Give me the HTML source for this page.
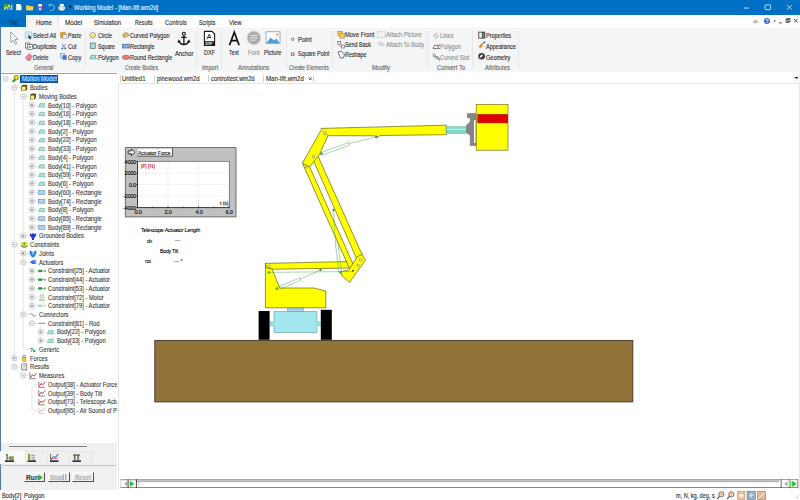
<!DOCTYPE html>
<html><head><meta charset="utf-8">
<style>
*{margin:0;padding:0;box-sizing:border-box}
html,body{width:800px;height:500px;overflow:hidden;background:#fff;font-family:"Liberation Sans",sans-serif;color:#222}
.a{position:absolute}
.t{position:absolute;white-space:nowrap;line-height:8px;transform:scaleX(.915);transform-origin:0 0;-webkit-text-stroke:0.1px currentColor}
.tc{transform-origin:50% 0}.tr{transform-origin:100% 0}
svg{position:absolute;overflow:visible}
</style></head><body>
<div class="a" style="left:0px;top:0px;width:800px;height:15px;background:#0070C4;"></div>
<div class="t" style="left:74.20px;top:4.20px;color:#f0f6ff;font-size:6.8px;transform:scaleX(0.864);">Working Model - [Man-lift.wm2d]</div>
<svg style="left:0;top:0" width="80" height="15">
<path d="M4 4.5h2l1 3 1-3h1.5l1 3 0.8-3h1v5.5h-1.5l-0.8-2.5-1 2.5h-1.5l-1-2.5-1 2.5h-1.5z" fill="#f0d020"/>
<rect x="4" y="4" width="3" height="3" fill="#40b040"/><rect x="8" y="7" width="3" height="3" fill="#30a0e0"/>
<path d="M16.2 4h3.6l1.6 1.6v4.6h-5.2z" fill="#fff"/><path d="M19.8 4v1.6h1.6" fill="#ccc"/>
<path d="M26 5.2h2.6l0.8 0.8h3.6v4.2h-7z" fill="#f0c040"/><path d="M26.5 10.2l1.2-3h6l-1.2 3z" fill="#f8d870"/>
<rect x="37" y="4" width="6.2" height="6.2" fill="#5a4fb0"/><rect x="38.2" y="4" width="3.8" height="2.4" fill="#fff"/><rect x="38.8" y="7.6" width="2.6" height="2.6" fill="#d8d0f0"/>
<path d="M49.2 5.5a3 3 0 1 1 1 4.8" stroke="#8ac0f0" stroke-width="1" fill="none"/><path d="M48 4.2l1.2 2.6 2-1.8z" fill="#8ac0f0"/>
<path d="M58.5 6.5h6.5v3h-6.5z" fill="#e8e8e8"/><path d="M59.8 4h4v2.5h-4z" fill="#fff"/><path d="M59.8 9h4v1.5h-4z" fill="#fff"/><circle cx="63.5" cy="8" r="0.6" fill="#40c040"/>
<path d="M68.5 5.8l1.8 2.3 1.8-2.3z" fill="#111"/>
</svg>
<svg style="left:740;top:0" width="60" height="15">
<rect x="3.9" y="7.6" width="4.9" height="0.9" fill="#d8e8f8"/>
<rect x="25" y="4.8" width="5.6" height="4.8" rx="0.8" fill="none" stroke="#d8e8f8" stroke-width="0.9"/>
<path d="M47 5l4.9 4.5M51.9 5l-4.9 4.5" stroke="#d8e8f8" stroke-width="0.8"/>
</svg>
<div class="a" style="left:0px;top:15px;width:800px;height:12px;background:#fff;"></div>
<div class="a" style="left:0px;top:15px;width:26px;height:12px;background:#0070C4;"></div>
<div class="t" style="left:9.40px;top:19.00px;color:#0c2d5c;font-size:6.8px;transform:scaleX(0.808);">File</div>
<div class="a" style="left:27px;top:14.5px;width:31.5px;height:13px;background:#F4F5F7;border-left:0.5px solid #e4e5e6;border-right:0.5px solid #e4e5e6"></div>
<div class="t" style="left:36.00px;top:19.00px;color:#262626;font-size:6.8px;transform:scaleX(0.876);">Home</div>
<div class="t" style="left:64.50px;top:19.00px;color:#262626;font-size:6.8px;transform:scaleX(0.925);">Model</div>
<div class="t" style="left:94.20px;top:19.00px;color:#262626;font-size:6.8px;transform:scaleX(0.853);">Simulation</div>
<div class="t" style="left:134.50px;top:19.00px;color:#262626;font-size:6.8px;transform:scaleX(0.782);">Results</div>
<div class="t" style="left:165.00px;top:19.00px;color:#262626;font-size:6.8px;transform:scaleX(0.856);">Controls</div>
<div class="t" style="left:199.40px;top:19.00px;color:#262626;font-size:6.8px;transform:scaleX(0.791);">Scripts</div>
<div class="t" style="left:229.10px;top:19.00px;color:#262626;font-size:6.8px;transform:scaleX(0.840);">View</div>
<svg style="left:750;top:15" width="50" height="12">
<path d="M3.5 7l2-2 2 2" stroke="#666" stroke-width="0.8" fill="none"/><rect x="3.5" y="7" width="4" height="0.6" fill="#666"/>
<circle cx="17" cy="6" r="3" fill="#3b6fd0"/><text x="15.6" y="8" font-size="5" fill="#fff" font-family="Liberation Sans" font-weight="bold">?</text>
<path d="M23.5 5.5l1.2 1.5 1.2-1.5z" fill="#333"/>
<rect x="29" y="7.5" width="3" height="0.8" fill="#333"/>
<rect x="36" y="4.5" width="3" height="3" fill="none" stroke="#333" stroke-width="0.7"/><rect x="37" y="3.5" width="3" height="3" fill="none" stroke="#333" stroke-width="0.7"/>
<path d="M44 4l3.5 3.5M47.5 4l-3.5 3.5" stroke="#333" stroke-width="0.8"/>
</svg>
<div class="a" style="left:0px;top:27px;width:800px;height:46px;background:#F4F5F7;"></div>
<div class="a" style="left:1px;top:27px;width:799px;height:1px;background:#FBFCFD;"></div>
<div class="a" style="left:0px;top:71.8px;width:800px;height:1.4px;background:#FBFBFC;"></div>
<div class="a" style="left:0px;top:73.2px;width:116.5px;height:1.1px;background:#A4A4A4;"></div>
<div class="t" style="left:6.20px;top:49.40px;color:#1e1e1e;font-size:6.5px;transform:scaleX(0.833);">Select</div>
<div class="t" style="left:33.20px;top:31.90px;color:#1e1e1e;font-size:6.5px;transform:scaleX(0.863);">Select All</div>
<div class="t" style="left:33.45px;top:42.50px;color:#1e1e1e;font-size:6.5px;transform:scaleX(0.873);">Duplicate</div>
<div class="t" style="left:33.45px;top:53.80px;color:#1e1e1e;font-size:6.5px;transform:scaleX(0.827);">Delete</div>
<div class="t" style="left:68.45px;top:31.90px;color:#1e1e1e;font-size:6.5px;transform:scaleX(0.798);">Paste</div>
<div class="t" style="left:68.45px;top:42.50px;color:#1e1e1e;font-size:6.5px;transform:scaleX(0.856);">Cut</div>
<div class="t" style="left:68.45px;top:53.80px;color:#1e1e1e;font-size:6.5px;transform:scaleX(0.878);">Copy</div>
<div class="t" style="left:34.10px;top:63.80px;color:#606060;font-size:6.5px;transform:scaleX(0.832);">General</div>
<div class="a" style="left:85.3px;top:31px;width:0.9px;height:38px;background:#E7E8EA;"></div>
<div class="t" style="left:98.40px;top:31.70px;color:#1e1e1e;font-size:6.5px;transform:scaleX(0.852);">Circle</div>
<div class="t" style="left:98.40px;top:42.50px;color:#1e1e1e;font-size:6.5px;transform:scaleX(0.812);">Square</div>
<div class="t" style="left:98.40px;top:53.80px;color:#1e1e1e;font-size:6.5px;transform:scaleX(0.880);">Polygon</div>
<div class="t" style="left:130.40px;top:31.70px;color:#1e1e1e;font-size:6.5px;transform:scaleX(0.857);">Curved Polygon</div>
<div class="t" style="left:130.40px;top:42.50px;color:#1e1e1e;font-size:6.5px;transform:scaleX(0.839);">Rectangle</div>
<div class="t" style="left:130.40px;top:53.80px;color:#1e1e1e;font-size:6.5px;transform:scaleX(0.841);">Round Rectangle</div>
<div class="t" style="left:124.70px;top:63.60px;color:#606060;font-size:6.5px;transform:scaleX(0.804);">Create Bodies</div>
<div class="t" style="left:175.00px;top:49.50px;color:#1e1e1e;font-size:6.5px;transform:scaleX(0.892);">Anchor</div>
<div class="a" style="left:196.3px;top:31px;width:0.9px;height:38px;background:#E7E8EA;"></div>
<div class="t" style="left:203.80px;top:49.40px;color:#1e1e1e;font-size:6.5px;transform:scaleX(0.850);">DXF</div>
<div class="t" style="left:201.70px;top:63.80px;color:#606060;font-size:6.5px;transform:scaleX(0.886);">Import</div>
<div class="a" style="left:221.3px;top:31px;width:0.9px;height:38px;background:#E7E8EA;"></div>
<div class="t" style="left:229.20px;top:49.40px;color:#1e1e1e;font-size:6.5px;transform:scaleX(0.821);">Text</div>
<div class="t" style="left:248.10px;top:49.40px;color:#8c8c8c;font-size:6.5px;transform:scaleX(0.890);">Font</div>
<div class="t" style="left:264.40px;top:49.40px;color:#1e1e1e;font-size:6.5px;transform:scaleX(0.863);">Picture</div>
<div class="t" style="left:238.45px;top:63.80px;color:#606060;font-size:6.5px;transform:scaleX(0.910);">Annotations</div>
<div class="a" style="left:286.3px;top:31px;width:0.9px;height:38px;background:#E7E8EA;"></div>
<div class="t" style="left:297.60px;top:35.80px;color:#1e1e1e;font-size:6.5px;transform:scaleX(0.918);">Point</div>
<div class="t" style="left:297.60px;top:50.30px;color:#1e1e1e;font-size:6.5px;transform:scaleX(0.839);">Square Point</div>
<div class="t" style="left:289.20px;top:63.80px;color:#606060;font-size:6.5px;transform:scaleX(0.825);">Create Elements</div>
<div class="a" style="left:332.3px;top:31px;width:0.9px;height:38px;background:#E7E8EA;"></div>
<div class="t" style="left:345.45px;top:31.30px;color:#1e1e1e;font-size:6.5px;transform:scaleX(0.892);">Move Front</div>
<div class="t" style="left:345.45px;top:41.40px;color:#1e1e1e;font-size:6.5px;transform:scaleX(0.828);">Send Back</div>
<div class="t" style="left:345.45px;top:51.40px;color:#1e1e1e;font-size:6.5px;transform:scaleX(0.828);">Reshape</div>
<div class="t" style="left:385.95px;top:31.30px;color:#8c8c8c;font-size:6.5px;transform:scaleX(0.879);">Attach Picture</div>
<div class="t" style="left:385.95px;top:41.40px;color:#8c8c8c;font-size:6.5px;transform:scaleX(0.873);">Attach To Body</div>
<div class="t" style="left:372.20px;top:63.70px;color:#606060;font-size:6.5px;transform:scaleX(0.946);">Modify</div>
<div class="a" style="left:427.3px;top:31px;width:0.9px;height:38px;background:#E7E8EA;"></div>
<div class="t" style="left:440.45px;top:31.90px;color:#8c8c8c;font-size:6.5px;transform:scaleX(0.873);">Lines</div>
<div class="t" style="left:440.45px;top:42.60px;color:#8c8c8c;font-size:6.5px;transform:scaleX(0.898);">Polygon</div>
<div class="t" style="left:440.45px;top:53.70px;color:#8c8c8c;font-size:6.5px;transform:scaleX(0.863);">Curved Slot</div>
<div class="t" style="left:437.20px;top:63.70px;color:#606060;font-size:6.5px;transform:scaleX(0.897);">Convert To</div>
<div class="a" style="left:472.3px;top:31px;width:0.9px;height:38px;background:#E7E8EA;"></div>
<div class="t" style="left:485.95px;top:31.90px;color:#1e1e1e;font-size:6.5px;transform:scaleX(0.846);">Properties</div>
<div class="t" style="left:485.95px;top:42.60px;color:#1e1e1e;font-size:6.5px;transform:scaleX(0.850);">Appearance</div>
<div class="t" style="left:485.95px;top:53.70px;color:#1e1e1e;font-size:6.5px;transform:scaleX(0.852);">Geometry</div>
<div class="t" style="left:484.70px;top:63.70px;color:#606060;font-size:6.5px;transform:scaleX(0.905);">Attributes</div>
<div class="a" style="left:518.3px;top:31px;width:0.9px;height:38px;background:#E7E8EA;"></div>
<svg style="left:0;top:0" width="800" height="74">
<!-- select arrow -->
<path d="M10.8 31.8 L10.8 42.5 L13.2 40.3 L15.3 44.3 L16.8 43.5 L14.8 39.6 L18 39.3 Z" fill="#fff" stroke="#777" stroke-width="0.7"/>
<!-- select all -->
<rect x="25.2" y="31.8" width="6.6" height="6.2" fill="#d8ecf8" stroke="#5aa0d0" stroke-width="0.6" stroke-dasharray="1 0.6"/>
<path d="M28.5 34.5l3 3.3-1.2 0.1 0.8 1.4-0.6 0.3-0.8-1.4-1 0.8z" fill="#222"/>
<!-- duplicate -->
<rect x="25.3" y="43" width="4.5" height="5" fill="#fff" stroke="#444" stroke-width="0.6"/>
<rect x="27.3" y="44.5" width="5" height="5" fill="#fff" stroke="#444" stroke-width="0.6"/>
<path d="M29.8 45.6v2.8M28.4 47h2.8" stroke="#222" stroke-width="0.5"/>
<!-- delete eraser -->
<path d="M25.3 57.5l4-4 3.3 3.3-4 4z" fill="#f08a9a" stroke="#b05060" stroke-width="0.5"/>
<path d="M26.5 59.8h5" stroke="#555" stroke-width="0.5"/>
<!-- paste -->
<rect x="60.2" y="32" width="5.5" height="6.2" fill="#d9a23a"/><rect x="62.8" y="34.6" width="4.2" height="4" fill="#eef" stroke="#667" stroke-width="0.4"/>
<!-- cut -->
<path d="M62 44l3 3.5M65.5 44l-3 3.5" stroke="#3a5fb0" stroke-width="0.7"/><circle cx="62.3" cy="48.5" r="0.9" fill="#3a5fb0"/><circle cx="65.3" cy="48.5" r="0.9" fill="#3a5fb0"/>
<!-- copy -->
<rect x="60.3" y="53.4" width="4" height="4.6" fill="#dde8f8" stroke="#5a7ab8" stroke-width="0.5"/><rect x="62.5" y="55.2" width="4.2" height="4.6" fill="#4a78c8"/>
<!-- circle -->
<circle cx="92.7" cy="35.3" r="2.8" fill="#f6e88a" stroke="#777" stroke-width="0.6"/>
<!-- square -->
<rect x="90.2" y="43" width="5" height="5.6" fill="#9fe0e8" stroke="#555" stroke-width="0.6"/>
<!-- polygon -->
<path d="M89.8 58.8 L91.5 55 L96.5 55.4 L95 57 L96.8 58.8 Z" fill="#9fe0d8" stroke="#4a8a88" stroke-width="0.6"/>
<!-- curved polygon -->
<path d="M123 35.5c0-3 4-3.5 5.5-1.5c1 1.5 -0.5 3.2 -2 2.2c-1.3-0.8-2.5 0.5-1.5 1.7c-1.2 0-2-1-2-2.4z" fill="#f0b858" stroke="#8a6a30" stroke-width="0.6"/>
<!-- rectangle -->
<rect x="122.6" y="44.2" width="6.8" height="3.8" fill="#7ab0e8" stroke="#3a5a90" stroke-width="0.6"/>
<!-- round rect -->
<rect x="122.6" y="55.4" width="6.8" height="3.8" rx="1.9" fill="#f07878" stroke="#903838" stroke-width="0.6"/>
<!-- anchor -->
<circle cx="183.9" cy="33.8" r="1.5" fill="none" stroke="#111" stroke-width="1.1"/>
<path d="M183.9 35.3v9.2M181.2 37.4h5.4" stroke="#111" stroke-width="1.3" fill="none"/>
<path d="M178.9 41c0.8 2.4 2.6 3.5 5 3.5s4.2-1.1 5-3.5" stroke="#111" stroke-width="1.3" fill="none"/>
<path d="M177.5 42.2l1.4-2.5 1.5 2.3z M190.3 42.2l-1.4-2.5-1.5 2.3z" fill="#111" stroke="#111" stroke-width="0.4"/>
<!-- DXF -->
<path d="M204.4 31.4h7.6l2.6 2.6v11.4h-10.2z" fill="#fff" stroke="#1a1a1a" stroke-width="1.1" stroke-linejoin="round"/>
<rect x="204.2" y="41.2" width="10.6" height="4.5" fill="#1a1a1a"/>
<path d="M206.8 39.3l2.4-5 1.2 2.6M208 37.5h3.2" stroke="#1a1a1a" stroke-width="0.9" fill="none"/>
<text x="205.6" y="44.8" font-size="3.3" fill="#fff" font-family="Liberation Sans" font-weight="bold">DXF</text>
<!-- A -->
<path d="M229.5 45.2 L234.3 32.2 L239.1 45.2 M231.3 40.6 H237.3" stroke="#111" stroke-width="1.7" fill="none"/>
<!-- font circle -->
<circle cx="253.9" cy="37.9" r="6.8" fill="#ABABAB" stroke="#d4d4d4" stroke-width="1"/>
<path d="M250.2 35.6h7.4M250.2 37.9h7.4M250.2 40.2h5.2" stroke="#f2f2f2" stroke-width="0.9"/>
<!-- picture -->
<rect x="266" y="31.8" width="14" height="11.5" fill="#fff" stroke="#888" stroke-width="0.7"/>
<path d="M266.5 43 L270.5 37.5 L274 40.5 L276.5 38.5 L279.5 43 Z" fill="#4a9be0"/>
<circle cx="277.2" cy="34.6" r="1" fill="#f08040"/>
<!-- point -->
<circle cx="292.7" cy="39.3" r="1.2" fill="none" stroke="#333" stroke-width="0.6"/>
<rect x="291.5" y="53" width="2.6" height="2.6" fill="none" stroke="#333" stroke-width="0.6"/>
<!-- move front -->
<rect x="337.8" y="31.2" width="4.5" height="4.5" fill="#f6c84a" stroke="#777" stroke-width="0.5"/>
<rect x="339.8" y="33.2" width="5" height="5" fill="#f6c84a" stroke="#888" stroke-width="0.5"/>
<!-- send back -->
<rect x="337.8" y="41.3" width="3" height="3" fill="none" stroke="#555" stroke-width="0.6"/>
<rect x="341.3" y="45" width="3" height="3" fill="none" stroke="#555" stroke-width="0.6"/>
<path d="M339 45v1.5h2" stroke="#e08030" stroke-width="0.5" fill="none"/>
<!-- reshape -->
<path d="M338 52l3-0.8 3.5 2.8-1 3.8-3 0.3z" fill="#fff" stroke="#333" stroke-width="0.7"/>
<!-- attach picture -->
<rect x="377.5" y="31.8" width="7.6" height="5.6" fill="none" stroke="#a8a8a8" stroke-width="0.6" stroke-dasharray="1 0.5"/>
<path d="M377.8 43.5c0-1.5 4-1.5 4 0s-4 1.5-4 0zM380.5 44.7c0-1.5 4-1.5 4 0s-4 1.5-4 0z" fill="none" stroke="#a8a8a8" stroke-width="0.6"/>
<!-- lines -->
<path d="M433.2 35.2l4.2-2.6M433.2 36.6l4.2-2.6M434.8 37.6l4.2-2.6M434.8 39l4.2-2.6" stroke="#9a9a9a" stroke-width="0.55"/>
<path d="M433 48.6 L434.6 45.4 L439.6 45.2 L437.6 47 L439.6 48.6 Z" fill="none" stroke="#555" stroke-width="0.8"/>
<path d="M432.8 54c2.2-0.4 2.4 2.8 4.4 2.8s1.8 2.2 2.8 2.6M432.8 55.8c2.2-0.4 2.4 2.8 4.4 2.8s1.6 1.6 2.4 2" fill="none" stroke="#444" stroke-width="0.75"/>
<!-- properties -->
<rect x="478.3" y="31.7" width="6.9" height="6.9" fill="#4a4a4a"/><rect x="479.2" y="32.6" width="2.6" height="5.1" fill="#f4f4f4"/><path d="M482.6 33.8h1.8M482.6 35.2h1.8M482.6 36.6h1.8" stroke="#ddd" stroke-width="0.5"/>
<!-- appearance -->
<path d="M478.4 46.4 L481 43.8 L483 45.8 L480.4 48.6 Z" fill="#f0902a"/><path d="M481.6 44.6l2.8-2.6" stroke="#333" stroke-width="0.9"/><circle cx="484.6" cy="42.2" r="0.7" fill="#333"/>
<!-- geometry -->
<circle cx="481.6" cy="56.3" r="3.3" fill="#3a3a3a"/><path d="M479.6 57.8c0-2 1.4-3.3 3.3-3.3c-0.3 1.6-1.5 3-3.3 3.3z" fill="#fff"/>
</svg>
<div class="a" style="left:0px;top:74.8px;width:116.5px;height:368px;background:#fff;"></div>
<div class="a" style="left:0px;top:443px;width:116.5px;height:47px;background:#F0F0F0;"></div>
<div class="a" style="left:0px;top:27px;width:1px;height:463px;background:#5479A4;"></div>
<div class="a" style="left:0;top:74px;width:117px;height:369px;overflow:hidden">
<svg style="left:0;top:-74px" width="117" height="443">
<path d="M7.6 79.0H12.0" stroke="#d4d4d4" stroke-width="0.6"/>
<rect x="3.3" y="76.6" width="4.6" height="4.6" rx="0.5" fill="#F4F4F6" stroke="#B4B4BA" stroke-width="0.6"/>
<path d="M4.4 78.9h2.4" stroke="#9a9aa8" stroke-width="0.55"/>
<path d="M13.3 81.2L16.3 78.2" stroke="#20a020" stroke-width="2.2" stroke-linecap="round"/><circle cx="16.3" cy="77.6" r="2.3" fill="#e8d820" stroke="#6a5a00" stroke-width="0.6"/>
<path d="M16.4 87.7H20.8" stroke="#d4d4d4" stroke-width="0.6"/>
<rect x="12.1" y="85.3" width="4.6" height="4.6" rx="0.5" fill="#F4F4F6" stroke="#B4B4BA" stroke-width="0.6"/>
<path d="M13.2 87.6h2.4" stroke="#9a9aa8" stroke-width="0.55"/>
<path d="M21.2 86.2l1.5-1.5h4.5v4.5l-1.5 1.5h-4.5z" fill="#5a5418"/><rect x="21.9" y="86.7" width="3.6" height="3.8" fill="#f4f07a"/>
<path d="M25.1 96.5H29.5" stroke="#d4d4d4" stroke-width="0.6"/>
<rect x="20.8" y="94.1" width="4.6" height="4.6" rx="0.5" fill="#F4F4F6" stroke="#B4B4BA" stroke-width="0.6"/>
<path d="M21.9 96.4h2.4" stroke="#9a9aa8" stroke-width="0.55"/>
<path d="M30.0 95.0l1.5-1.5h4.5v4.5l-1.5 1.5h-4.5z" fill="#5a5418"/><rect x="30.6" y="95.5" width="3.6" height="3.8" fill="#f4f07a"/>
<path d="M33.9 105.2H38.2" stroke="#d4d4d4" stroke-width="0.6"/>
<rect x="29.6" y="102.8" width="4.6" height="4.6" rx="0.5" fill="#F4F4F6" stroke="#B4B4BA" stroke-width="0.6"/>
<path d="M30.7 105.1h2.4" stroke="#3a3a50" stroke-width="0.55"/>
<path d="M31.9 103.9v2.4" stroke="#3a3a50" stroke-width="0.55"/>
<path d="M38.5 107.0l1.5-3.5 5 0.3-1.5 1.5 1.8 1.7z" fill="#a8e4dc" stroke="#4c9c94" stroke-width="0.5"/>
<path d="M33.9 113.9H38.2" stroke="#d4d4d4" stroke-width="0.6"/>
<rect x="29.6" y="111.5" width="4.6" height="4.6" rx="0.5" fill="#F4F4F6" stroke="#B4B4BA" stroke-width="0.6"/>
<path d="M30.7 113.8h2.4" stroke="#3a3a50" stroke-width="0.55"/>
<path d="M31.9 112.6v2.4" stroke="#3a3a50" stroke-width="0.55"/>
<path d="M38.5 115.7l1.5-3.5 5 0.3-1.5 1.5 1.8 1.7z" fill="#a8e4dc" stroke="#4c9c94" stroke-width="0.5"/>
<path d="M33.9 122.6H38.2" stroke="#d4d4d4" stroke-width="0.6"/>
<rect x="29.6" y="120.2" width="4.6" height="4.6" rx="0.5" fill="#F4F4F6" stroke="#B4B4BA" stroke-width="0.6"/>
<path d="M30.7 122.5h2.4" stroke="#3a3a50" stroke-width="0.55"/>
<path d="M31.9 121.3v2.4" stroke="#3a3a50" stroke-width="0.55"/>
<path d="M38.5 124.4l1.5-3.5 5 0.3-1.5 1.5 1.8 1.7z" fill="#a8e4dc" stroke="#4c9c94" stroke-width="0.5"/>
<path d="M33.9 131.4H38.2" stroke="#d4d4d4" stroke-width="0.6"/>
<rect x="29.6" y="129.0" width="4.6" height="4.6" rx="0.5" fill="#F4F4F6" stroke="#B4B4BA" stroke-width="0.6"/>
<path d="M30.7 131.3h2.4" stroke="#3a3a50" stroke-width="0.55"/>
<path d="M31.9 130.1v2.4" stroke="#3a3a50" stroke-width="0.55"/>
<path d="M38.5 133.2l1.5-3.5 5 0.3-1.5 1.5 1.8 1.7z" fill="#a8e4dc" stroke="#4c9c94" stroke-width="0.5"/>
<path d="M33.9 140.1H38.2" stroke="#d4d4d4" stroke-width="0.6"/>
<rect x="29.6" y="137.7" width="4.6" height="4.6" rx="0.5" fill="#F4F4F6" stroke="#B4B4BA" stroke-width="0.6"/>
<path d="M30.7 140.0h2.4" stroke="#3a3a50" stroke-width="0.55"/>
<path d="M31.9 138.8v2.4" stroke="#3a3a50" stroke-width="0.55"/>
<path d="M38.5 141.9l1.5-3.5 5 0.3-1.5 1.5 1.8 1.7z" fill="#a8e4dc" stroke="#4c9c94" stroke-width="0.5"/>
<path d="M33.9 148.8H38.2" stroke="#d4d4d4" stroke-width="0.6"/>
<rect x="29.6" y="146.4" width="4.6" height="4.6" rx="0.5" fill="#F4F4F6" stroke="#B4B4BA" stroke-width="0.6"/>
<path d="M30.7 148.7h2.4" stroke="#3a3a50" stroke-width="0.55"/>
<path d="M31.9 147.5v2.4" stroke="#3a3a50" stroke-width="0.55"/>
<path d="M38.5 150.6l1.5-3.5 5 0.3-1.5 1.5 1.8 1.7z" fill="#a8e4dc" stroke="#4c9c94" stroke-width="0.5"/>
<path d="M33.9 157.5H38.2" stroke="#d4d4d4" stroke-width="0.6"/>
<rect x="29.6" y="155.1" width="4.6" height="4.6" rx="0.5" fill="#F4F4F6" stroke="#B4B4BA" stroke-width="0.6"/>
<path d="M30.7 157.4h2.4" stroke="#3a3a50" stroke-width="0.55"/>
<path d="M31.9 156.2v2.4" stroke="#3a3a50" stroke-width="0.55"/>
<path d="M38.5 159.3l1.5-3.5 5 0.3-1.5 1.5 1.8 1.7z" fill="#a8e4dc" stroke="#4c9c94" stroke-width="0.5"/>
<path d="M33.9 166.3H38.2" stroke="#d4d4d4" stroke-width="0.6"/>
<rect x="29.6" y="163.9" width="4.6" height="4.6" rx="0.5" fill="#F4F4F6" stroke="#B4B4BA" stroke-width="0.6"/>
<path d="M30.7 166.2h2.4" stroke="#3a3a50" stroke-width="0.55"/>
<path d="M31.9 165.0v2.4" stroke="#3a3a50" stroke-width="0.55"/>
<path d="M38.5 168.1l1.5-3.5 5 0.3-1.5 1.5 1.8 1.7z" fill="#a8e4dc" stroke="#4c9c94" stroke-width="0.5"/>
<path d="M33.9 175.0H38.2" stroke="#d4d4d4" stroke-width="0.6"/>
<rect x="29.6" y="172.6" width="4.6" height="4.6" rx="0.5" fill="#F4F4F6" stroke="#B4B4BA" stroke-width="0.6"/>
<path d="M30.7 174.9h2.4" stroke="#3a3a50" stroke-width="0.55"/>
<path d="M31.9 173.7v2.4" stroke="#3a3a50" stroke-width="0.55"/>
<path d="M38.5 176.8l1.5-3.5 5 0.3-1.5 1.5 1.8 1.7z" fill="#a8e4dc" stroke="#4c9c94" stroke-width="0.5"/>
<path d="M33.9 183.7H38.2" stroke="#d4d4d4" stroke-width="0.6"/>
<rect x="29.6" y="181.3" width="4.6" height="4.6" rx="0.5" fill="#F4F4F6" stroke="#B4B4BA" stroke-width="0.6"/>
<path d="M30.7 183.6h2.4" stroke="#3a3a50" stroke-width="0.55"/>
<path d="M31.9 182.4v2.4" stroke="#3a3a50" stroke-width="0.55"/>
<path d="M38.5 185.5l1.5-3.5 5 0.3-1.5 1.5 1.8 1.7z" fill="#a8e4dc" stroke="#4c9c94" stroke-width="0.5"/>
<path d="M33.9 192.4H38.2" stroke="#d4d4d4" stroke-width="0.6"/>
<rect x="29.6" y="190.0" width="4.6" height="4.6" rx="0.5" fill="#F4F4F6" stroke="#B4B4BA" stroke-width="0.6"/>
<path d="M30.7 192.3h2.4" stroke="#3a3a50" stroke-width="0.55"/>
<path d="M31.9 191.1v2.4" stroke="#3a3a50" stroke-width="0.55"/>
<rect x="38.5" y="190.6" width="6.4" height="3.8" fill="#a8d4f4" stroke="#4a7aa8" stroke-width="0.5"/>
<path d="M33.9 201.2H38.2" stroke="#d4d4d4" stroke-width="0.6"/>
<rect x="29.6" y="198.8" width="4.6" height="4.6" rx="0.5" fill="#F4F4F6" stroke="#B4B4BA" stroke-width="0.6"/>
<path d="M30.7 201.1h2.4" stroke="#3a3a50" stroke-width="0.55"/>
<path d="M31.9 199.9v2.4" stroke="#3a3a50" stroke-width="0.55"/>
<rect x="38.5" y="199.4" width="6.4" height="3.8" fill="#a8d4f4" stroke="#4a7aa8" stroke-width="0.5"/>
<path d="M33.9 209.9H38.2" stroke="#d4d4d4" stroke-width="0.6"/>
<rect x="29.6" y="207.5" width="4.6" height="4.6" rx="0.5" fill="#F4F4F6" stroke="#B4B4BA" stroke-width="0.6"/>
<path d="M30.7 209.8h2.4" stroke="#3a3a50" stroke-width="0.55"/>
<path d="M31.9 208.6v2.4" stroke="#3a3a50" stroke-width="0.55"/>
<path d="M38.5 211.7l1.5-3.5 5 0.3-1.5 1.5 1.8 1.7z" fill="#a8e4dc" stroke="#4c9c94" stroke-width="0.5"/>
<path d="M33.9 218.6H38.2" stroke="#d4d4d4" stroke-width="0.6"/>
<rect x="29.6" y="216.2" width="4.6" height="4.6" rx="0.5" fill="#F4F4F6" stroke="#B4B4BA" stroke-width="0.6"/>
<path d="M30.7 218.5h2.4" stroke="#3a3a50" stroke-width="0.55"/>
<path d="M31.9 217.3v2.4" stroke="#3a3a50" stroke-width="0.55"/>
<rect x="38.5" y="216.8" width="6.4" height="3.8" fill="#a8d4f4" stroke="#4a7aa8" stroke-width="0.5"/>
<path d="M33.9 227.3H38.2" stroke="#d4d4d4" stroke-width="0.6"/>
<rect x="29.6" y="224.9" width="4.6" height="4.6" rx="0.5" fill="#F4F4F6" stroke="#B4B4BA" stroke-width="0.6"/>
<path d="M30.7 227.2h2.4" stroke="#3a3a50" stroke-width="0.55"/>
<path d="M31.9 226.0v2.4" stroke="#3a3a50" stroke-width="0.55"/>
<rect x="38.5" y="225.5" width="6.4" height="3.8" fill="#a8d4f4" stroke="#4a7aa8" stroke-width="0.5"/>
<path d="M25.1 236.1H29.5" stroke="#d4d4d4" stroke-width="0.6"/>
<rect x="20.8" y="233.7" width="4.6" height="4.6" rx="0.5" fill="#F4F4F6" stroke="#B4B4BA" stroke-width="0.6"/>
<path d="M21.9 236.0h2.4" stroke="#3a3a50" stroke-width="0.55"/>
<path d="M23.1 234.8v2.4" stroke="#3a3a50" stroke-width="0.55"/>
<path d="M29.8 232.9l1.6 1.4 1.6-1.4 1.6 1.4 1.6-1.4v2.4l-2.2 3.2v1.4h-2v-1.4l-2.2-3.2z" fill="#2434e0"/>
<path d="M16.4 244.8H20.8" stroke="#d4d4d4" stroke-width="0.6"/>
<rect x="12.1" y="242.4" width="4.6" height="4.6" rx="0.5" fill="#F4F4F6" stroke="#B4B4BA" stroke-width="0.6"/>
<path d="M13.2 244.7h2.4" stroke="#9a9aa8" stroke-width="0.55"/>
<ellipse cx="24.2" cy="244.6" rx="3.4" ry="2.8" fill="#d8e040"/><path d="M21.1 245.4q3.2 2.6 6.4 0v0.8q-3.2 2.4-6.4 0z" fill="#1a5a10"/><path d="M23.2 242.8l1 2.8 1-2.8z" fill="#208020"/>
<path d="M25.1 253.5H29.5" stroke="#d4d4d4" stroke-width="0.6"/>
<rect x="20.8" y="251.1" width="4.6" height="4.6" rx="0.5" fill="#F4F4F6" stroke="#B4B4BA" stroke-width="0.6"/>
<path d="M21.9 253.4h2.4" stroke="#3a3a50" stroke-width="0.55"/>
<path d="M23.1 252.2v2.4" stroke="#3a3a50" stroke-width="0.55"/>
<path d="M29.7 250.3l1.6 0.6 1.7 2.2 1.7-2.2 1.6-0.6v3.4l-2.2 3.5h-2.2l-2.2-3.5z" fill="#2a80e0"/><path d="M31.5 253.0l1.5 2 1.5-2" fill="#80d0f8"/>
<path d="M25.1 262.2H29.5" stroke="#d4d4d4" stroke-width="0.6"/>
<rect x="20.8" y="259.8" width="4.6" height="4.6" rx="0.5" fill="#F4F4F6" stroke="#B4B4BA" stroke-width="0.6"/>
<path d="M21.9 262.1h2.4" stroke="#9a9aa8" stroke-width="0.55"/>
<path d="M29.8 262.2l2.6-1.9h3.8v3.8h-3.8z" fill="#3870e8"/><path d="M35.0 261.0h1.4v2.4h-1.4z" fill="#a0c0f8"/>
<path d="M33.9 271.0H38.2" stroke="#d4d4d4" stroke-width="0.6"/>
<rect x="29.6" y="268.6" width="4.6" height="4.6" rx="0.5" fill="#F4F4F6" stroke="#B4B4BA" stroke-width="0.6"/>
<path d="M30.7 270.9h2.4" stroke="#3a3a50" stroke-width="0.55"/>
<path d="M31.9 269.7v2.4" stroke="#3a3a50" stroke-width="0.55"/>
<rect x="38.2" y="269.8" width="4" height="2.4" fill="#2a9a3a"/><path d="M42.2 271.0h3M45.2 269.7v2.6" stroke="#2a9a3a" stroke-width="0.7"/>
<path d="M33.9 279.7H38.2" stroke="#d4d4d4" stroke-width="0.6"/>
<rect x="29.6" y="277.3" width="4.6" height="4.6" rx="0.5" fill="#F4F4F6" stroke="#B4B4BA" stroke-width="0.6"/>
<path d="M30.7 279.6h2.4" stroke="#3a3a50" stroke-width="0.55"/>
<path d="M31.9 278.4v2.4" stroke="#3a3a50" stroke-width="0.55"/>
<rect x="38.2" y="278.5" width="4" height="2.4" fill="#2a9a3a"/><path d="M42.2 279.7h3M45.2 278.4v2.6" stroke="#2a9a3a" stroke-width="0.7"/>
<path d="M33.9 288.4H38.2" stroke="#d4d4d4" stroke-width="0.6"/>
<rect x="29.6" y="286.0" width="4.6" height="4.6" rx="0.5" fill="#F4F4F6" stroke="#B4B4BA" stroke-width="0.6"/>
<path d="M30.7 288.3h2.4" stroke="#3a3a50" stroke-width="0.55"/>
<path d="M31.9 287.1v2.4" stroke="#3a3a50" stroke-width="0.55"/>
<rect x="38.2" y="287.2" width="4" height="2.4" fill="#2a9a3a"/><path d="M42.2 288.4h3M45.2 287.1v2.6" stroke="#2a9a3a" stroke-width="0.7"/>
<path d="M33.9 297.2H38.2" stroke="#d4d4d4" stroke-width="0.6"/>
<rect x="29.6" y="294.8" width="4.6" height="4.6" rx="0.5" fill="#F4F4F6" stroke="#B4B4BA" stroke-width="0.6"/>
<path d="M30.7 297.1h2.4" stroke="#3a3a50" stroke-width="0.55"/>
<path d="M31.9 295.9v2.4" stroke="#3a3a50" stroke-width="0.55"/>
<circle cx="41.8" cy="296.4" r="1.8" fill="none" stroke="#60b060" stroke-width="0.7"/><path d="M38.8 300.0h6" stroke="#60b060" stroke-width="0.9"/>
<path d="M33.9 305.9H38.2" stroke="#d4d4d4" stroke-width="0.6"/>
<rect x="29.6" y="303.5" width="4.6" height="4.6" rx="0.5" fill="#F4F4F6" stroke="#B4B4BA" stroke-width="0.6"/>
<path d="M30.7 305.8h2.4" stroke="#3a3a50" stroke-width="0.55"/>
<path d="M31.9 304.6v2.4" stroke="#3a3a50" stroke-width="0.55"/>
<rect x="38.2" y="304.7" width="4" height="2.4" fill="#a8dca8"/><path d="M42.2 305.9h3M45.2 304.6v2.6" stroke="#a8dca8" stroke-width="0.7"/>
<path d="M25.1 314.6H29.5" stroke="#d4d4d4" stroke-width="0.6"/>
<rect x="20.8" y="312.2" width="4.6" height="4.6" rx="0.5" fill="#F4F4F6" stroke="#B4B4BA" stroke-width="0.6"/>
<path d="M21.9 314.5h2.4" stroke="#9a9aa8" stroke-width="0.55"/>
<path d="M29.5 315.1c1.5-2 3-2 3.5 0s2 1.5 3 0" stroke="#444" stroke-width="0.6" fill="none"/>
<path d="M33.9 323.3H38.2" stroke="#d4d4d4" stroke-width="0.6"/>
<rect x="29.6" y="320.9" width="4.6" height="4.6" rx="0.5" fill="#F4F4F6" stroke="#B4B4BA" stroke-width="0.6"/>
<path d="M30.7 323.2h2.4" stroke="#9a9aa8" stroke-width="0.55"/>
<path d="M38.2 323.3h7" stroke="#333" stroke-width="0.6"/>
<path d="M42.6 332.1H47.0" stroke="#d4d4d4" stroke-width="0.6"/>
<rect x="38.3" y="329.7" width="4.6" height="4.6" rx="0.5" fill="#F4F4F6" stroke="#B4B4BA" stroke-width="0.6"/>
<path d="M39.4 332.0h2.4" stroke="#3a3a50" stroke-width="0.55"/>
<path d="M40.6 330.8v2.4" stroke="#3a3a50" stroke-width="0.55"/>
<path d="M47.3 333.9l1.5-3.5 5 0.3-1.5 1.5 1.8 1.7z" fill="#a8e4dc" stroke="#4c9c94" stroke-width="0.5"/>
<path d="M42.6 340.8H47.0" stroke="#d4d4d4" stroke-width="0.6"/>
<rect x="38.3" y="338.4" width="4.6" height="4.6" rx="0.5" fill="#F4F4F6" stroke="#B4B4BA" stroke-width="0.6"/>
<path d="M39.4 340.7h2.4" stroke="#3a3a50" stroke-width="0.55"/>
<path d="M40.6 339.5v2.4" stroke="#3a3a50" stroke-width="0.55"/>
<path d="M47.3 342.6l1.5-3.5 5 0.3-1.5 1.5 1.8 1.7z" fill="#a8e4dc" stroke="#4c9c94" stroke-width="0.5"/>
<path d="M25.1 349.5H29.5" stroke="#d4d4d4" stroke-width="0.6"/>
<text x="29.5" y="351.5" font-size="6" fill="#2050c0" font-family="Liberation Sans" font-weight="bold">?</text><circle cx="34.2" cy="351.0" r="1.3" fill="#30a030"/>
<path d="M16.4 358.2H20.8" stroke="#d4d4d4" stroke-width="0.6"/>
<rect x="12.1" y="355.8" width="4.6" height="4.6" rx="0.5" fill="#F4F4F6" stroke="#B4B4BA" stroke-width="0.6"/>
<path d="M13.2 358.1h2.4" stroke="#3a3a50" stroke-width="0.55"/>
<path d="M14.3 356.9v2.4" stroke="#3a3a50" stroke-width="0.55"/>
<circle cx="24.2" cy="356.2" r="1.2" fill="none" stroke="#333" stroke-width="0.5"/><rect x="22.4" y="357.7" width="3.6" height="3.5" fill="#f0d030" stroke="#806020" stroke-width="0.4"/>
<path d="M16.4 367.0H20.8" stroke="#d4d4d4" stroke-width="0.6"/>
<rect x="12.1" y="364.6" width="4.6" height="4.6" rx="0.5" fill="#F4F4F6" stroke="#B4B4BA" stroke-width="0.6"/>
<path d="M13.2 366.9h2.4" stroke="#9a9aa8" stroke-width="0.55"/>
<rect x="21.8" y="364.0" width="5" height="6" fill="#fff" stroke="#444" stroke-width="0.6"/><path d="M23.1 366.0h2.4M23.1 368.0h2.4" stroke="#444" stroke-width="0.5"/>
<path d="M25.1 375.7H29.5" stroke="#d4d4d4" stroke-width="0.6"/>
<rect x="20.8" y="373.3" width="4.6" height="4.6" rx="0.5" fill="#F4F4F6" stroke="#B4B4BA" stroke-width="0.6"/>
<path d="M21.9 375.6h2.4" stroke="#9a9aa8" stroke-width="0.55"/>
<path d="M30.0 372.7v6h6" stroke="#333" stroke-width="0.6" fill="none"/><path d="M30.5 377.7l2-3 1.5 1.5 2.5-3" stroke="#d02020" stroke-width="0.9" fill="none"/>
<path d="M33.9 384.4H38.2" stroke="#d4d4d4" stroke-width="0.6"/>
<path d="M38.8 381.4v6h6" stroke="#333" stroke-width="0.6" fill="none"/><path d="M39.2 386.4l2-3 1.5 1.5 2.5-3" stroke="#d02020" stroke-width="0.9" fill="none"/>
<path d="M33.9 393.1H38.2" stroke="#d4d4d4" stroke-width="0.6"/>
<path d="M38.8 390.1v6h6" stroke="#333" stroke-width="0.6" fill="none"/><path d="M39.2 395.1l2-3 1.5 1.5 2.5-3" stroke="#d02020" stroke-width="0.9" fill="none"/>
<path d="M33.9 401.9H38.2" stroke="#d4d4d4" stroke-width="0.6"/>
<path d="M38.8 398.9v6h6" stroke="#333" stroke-width="0.6" fill="none"/><path d="M39.2 403.9l2-3 1.5 1.5 2.5-3" stroke="#d02020" stroke-width="0.9" fill="none"/>
<path d="M33.9 410.6H38.2" stroke="#d4d4d4" stroke-width="0.6"/>
<path d="M38.8 407.6v6h6" stroke="#bbb" stroke-width="0.6" fill="none"/><path d="M39.2 412.6l2-3 1.5 1.5 2.5-3" stroke="#f0a0a0" stroke-width="0.9" fill="none"/>
<path d="M14.4 89.7V367.0" stroke="#d4d4d4" stroke-width="0.6"/>
<path d="M23.2 98.5V236.1" stroke="#d4d4d4" stroke-width="0.6"/>
<path d="M32.0 107.2V227.3" stroke="#d4d4d4" stroke-width="0.6"/>
<path d="M23.2 255.5V349.5" stroke="#d4d4d4" stroke-width="0.6"/>
<path d="M32.0 273.0V305.9" stroke="#d4d4d4" stroke-width="0.6"/>
<path d="M32.0 325.3V323.3" stroke="#d4d4d4" stroke-width="0.6"/>
<path d="M40.7 325.3V340.8" stroke="#d4d4d4" stroke-width="0.6"/>
<path d="M23.2 377.7V375.7" stroke="#d4d4d4" stroke-width="0.6"/>
<path d="M32.0 386.4V410.6" stroke="#d4d4d4" stroke-width="0.6"/>
</svg>
<div class="a" style="left:20.4px;top:0.8px;width:37.4px;height:8.6px;background:#136CCF;border:0.6px solid #0a4a98"></div>
<div class="t" style="left:21.70px;top:1.40px;color:#c0e4ff;font-size:6.5px;transform:scaleX(.89)">Motion Model</div>
<div class="t" style="left:30.45px;top:10.13px;color:#383838;font-size:6.5px;transform:scaleX(.885)">Bodies</div>
<div class="t" style="left:39.20px;top:18.85px;color:#383838;font-size:6.5px;transform:scaleX(.885)">Moving Bodies</div>
<div class="t" style="left:47.95px;top:27.58px;color:#383838;font-size:6.5px;transform:scaleX(.885)">Body[10] - Polygon</div>
<div class="t" style="left:47.95px;top:36.30px;color:#383838;font-size:6.5px;transform:scaleX(.885)">Body[16] - Polygon</div>
<div class="t" style="left:47.95px;top:45.03px;color:#383838;font-size:6.5px;transform:scaleX(.885)">Body[18] - Polygon</div>
<div class="t" style="left:47.95px;top:53.76px;color:#383838;font-size:6.5px;transform:scaleX(.885)">Body[2] - Polygon</div>
<div class="t" style="left:47.95px;top:62.48px;color:#383838;font-size:6.5px;transform:scaleX(.885)">Body[22] - Polygon</div>
<div class="t" style="left:47.95px;top:71.21px;color:#383838;font-size:6.5px;transform:scaleX(.885)">Body[33] - Polygon</div>
<div class="t" style="left:47.95px;top:79.93px;color:#383838;font-size:6.5px;transform:scaleX(.885)">Body[4] - Polygon</div>
<div class="t" style="left:47.95px;top:88.66px;color:#383838;font-size:6.5px;transform:scaleX(.885)">Body[41] - Polygon</div>
<div class="t" style="left:47.95px;top:97.39px;color:#383838;font-size:6.5px;transform:scaleX(.885)">Body[59] - Polygon</div>
<div class="t" style="left:47.95px;top:106.11px;color:#383838;font-size:6.5px;transform:scaleX(.885)">Body[6] - Polygon</div>
<div class="t" style="left:47.95px;top:114.84px;color:#383838;font-size:6.5px;transform:scaleX(.885)">Body[60] - Rectangle</div>
<div class="t" style="left:47.95px;top:123.56px;color:#383838;font-size:6.5px;transform:scaleX(.885)">Body[74] - Rectangle</div>
<div class="t" style="left:47.95px;top:132.29px;color:#383838;font-size:6.5px;transform:scaleX(.885)">Body[8] - Polygon</div>
<div class="t" style="left:47.95px;top:141.02px;color:#383838;font-size:6.5px;transform:scaleX(.885)">Body[85] - Rectangle</div>
<div class="t" style="left:47.95px;top:149.74px;color:#383838;font-size:6.5px;transform:scaleX(.885)">Body[89] - Rectangle</div>
<div class="t" style="left:39.20px;top:158.47px;color:#383838;font-size:6.5px;transform:scaleX(.885)">Grounded Bodies</div>
<div class="t" style="left:30.45px;top:167.19px;color:#383838;font-size:6.5px;transform:scaleX(.885)">Constraints</div>
<div class="t" style="left:39.20px;top:175.92px;color:#383838;font-size:6.5px;transform:scaleX(.885)">Joints</div>
<div class="t" style="left:39.20px;top:184.65px;color:#383838;font-size:6.5px;transform:scaleX(.885)">Actuators</div>
<div class="t" style="left:47.95px;top:193.37px;color:#383838;font-size:6.5px;transform:scaleX(.885)">Constraint[25] - Actuator</div>
<div class="t" style="left:47.95px;top:202.10px;color:#383838;font-size:6.5px;transform:scaleX(.885)">Constraint[44] - Actuator</div>
<div class="t" style="left:47.95px;top:210.82px;color:#383838;font-size:6.5px;transform:scaleX(.885)">Constraint[53] - Actuator</div>
<div class="t" style="left:47.95px;top:219.55px;color:#383838;font-size:6.5px;transform:scaleX(.885)">Constraint[72] - Motor</div>
<div class="t" style="left:47.95px;top:228.28px;color:#383838;font-size:6.5px;transform:scaleX(.885)">Constraint[79] - Actuator</div>
<div class="t" style="left:39.20px;top:237.00px;color:#383838;font-size:6.5px;transform:scaleX(.885)">Connectors</div>
<div class="t" style="left:47.95px;top:245.73px;color:#383838;font-size:6.5px;transform:scaleX(.885)">Constraint[81] - Rod</div>
<div class="t" style="left:56.70px;top:254.45px;color:#383838;font-size:6.5px;transform:scaleX(.885)">Body[22] - Polygon</div>
<div class="t" style="left:56.70px;top:263.18px;color:#383838;font-size:6.5px;transform:scaleX(.885)">Body[33] - Polygon</div>
<div class="t" style="left:39.20px;top:271.91px;color:#383838;font-size:6.5px;transform:scaleX(.885)">Generic</div>
<div class="t" style="left:30.45px;top:280.63px;color:#383838;font-size:6.5px;transform:scaleX(.885)">Forces</div>
<div class="t" style="left:30.45px;top:289.36px;color:#383838;font-size:6.5px;transform:scaleX(.885)">Results</div>
<div class="t" style="left:39.20px;top:298.08px;color:#383838;font-size:6.5px;transform:scaleX(.885)">Measures</div>
<div class="t" style="left:47.95px;top:306.81px;color:#383838;font-size:6.5px;transform:scaleX(.885)">Output[38] - Actuator Force</div>
<div class="t" style="left:47.95px;top:315.54px;color:#383838;font-size:6.5px;transform:scaleX(.885)">Output[39] - Body Tilt</div>
<div class="t" style="left:47.95px;top:324.26px;color:#383838;font-size:6.5px;transform:scaleX(.885)">Output[73] - Telescope Actuator</div>
<div class="t" style="left:47.95px;top:332.99px;color:#383838;font-size:6.5px;transform:scaleX(.885)">Output[95] - Air Sound of Pressure</div>
</div>
<div class="a" style="left:9px;top:446px;width:78px;height:1px;background:#808080;"></div>
<div class="a" style="left:0px;top:451.2px;width:24.5px;height:13px;background:#F9F9F9;"></div>
<div class="a" style="left:24.5px;top:451.2px;width:0.8px;height:13px;background:#E6E6E6;"></div>
<div class="a" style="left:46.5px;top:451.2px;width:0.8px;height:13px;background:#E6E6E6;"></div>
<div class="a" style="left:68.8px;top:451.2px;width:0.8px;height:13px;background:#E6E6E6;"></div>
<div class="a" style="left:91.2px;top:451.2px;width:0.8px;height:13px;background:#E6E6E6;"></div>
<div class="a" style="left:24.5px;top:451.2px;width:67px;height:0.8px;background:#E6E6E6;"></div>
<div class="a" style="left:0px;top:465px;width:116.5px;height:1px;background:#C4C4C4;"></div>
<svg style="left:0;top:0" width="117" height="500">
<rect x="5" y="460.4" width="9" height="1.5" fill="#1a1a1a"/>
<path d="M7 455v5.5" stroke="#333" stroke-width="0.9"/><circle cx="7" cy="455" r="1.3" fill="#6a9a30"/><rect x="9.8" y="456.8" width="3.4" height="3.2" fill="#8aa030" stroke="#4a5a20" stroke-width="0.4"/><path d="M7 458h3" stroke="#333" stroke-width="0.6"/>
<rect x="27.5" y="460.4" width="8.5" height="1.5" fill="#1a1a1a"/>
<rect x="28" y="454" width="2.2" height="6.3" fill="#8a9a40"/><path d="M31.5 455.3h3.5M31.5 457.3h3.5M31.5 459.2h3.5" stroke="#555" stroke-width="0.6"/>
<rect x="50" y="460.4" width="8.5" height="1.5" fill="#1a1a1a"/>
<path d="M50.6 454v6.3" stroke="#333" stroke-width="0.7"/><path d="M51 459l2.5-2.5 2 1 2.5-3.5" stroke="#2050c0" stroke-width="1" fill="none"/><path d="M51 459.6l3-1.2 2 0.3 2-0.8" stroke="#d02020" stroke-width="0.6" fill="none"/>
<rect x="72.5" y="460.4" width="8.5" height="1.5" fill="#1a1a1a"/>
<path d="M73 455h7M74.8 455v5M78 455v5" stroke="#3a3a20" stroke-width="1.1"/><path d="M73.5 457.5h1M77.6 457.5h2" stroke="#8a9a40" stroke-width="0.7"/>
</svg>
<div class="a" style="left:23.5px;top:471.5px;width:21.5px;height:10.8px;background:#F1F1F1;border-top:0.6px solid #fafafa;border-left:0.6px solid #fafafa;border-right:1.1px solid #505050;border-bottom:1.1px solid #505050"></div>
<div class="t" style="left:25.70px;top:473.70px;color:#3a3a3a;font-size:6.6px;transform:scaleX(1.011);font-weight:bold">Run</div>
<div class="a" style="left:47.5px;top:471.5px;width:22.0px;height:10.8px;background:#F1F1F1;border-top:0.6px solid #fafafa;border-left:0.6px solid #fafafa;border-right:1.1px solid #505050;border-bottom:1.1px solid #505050"></div>
<div class="t" style="left:49.50px;top:473.70px;color:#b0b0b0;font-size:6.6px;transform:scaleX(0.857);font-weight:bold">Stop</div>
<div class="a" style="left:72px;top:471.5px;width:21.5px;height:10.8px;background:#F1F1F1;border-top:0.6px solid #fafafa;border-left:0.6px solid #fafafa;border-right:1.1px solid #505050;border-bottom:1.1px solid #505050"></div>
<div class="t" style="left:74.70px;top:473.70px;color:#b0b0b0;font-size:6.6px;transform:scaleX(0.895);font-weight:bold">Reset</div>
<svg style="left:0;top:0" width="117" height="500">
<path d="M38.6 474.3l4 3.2-4 3.2z" fill="#20c020"/>
<rect x="62.7" y="474.3" width="1.3" height="6" fill="#aaa"/><rect x="65" y="474.3" width="1.3" height="6" fill="#aaa"/>
</svg>
<div class="a" style="left:118px;top:74px;width:682px;height:9px;background:#fff;"></div>
<div class="a" style="left:119.8px;top:75px;width:0.9px;height:6.6px;background:#D0D0D0;"></div>
<div class="a" style="left:154.4px;top:75px;width:0.9px;height:6.6px;background:#D0D0D0;"></div>
<div class="a" style="left:208.2px;top:75px;width:0.9px;height:6.6px;background:#D0D0D0;"></div>
<div class="a" style="left:263.3px;top:75px;width:0.9px;height:6.6px;background:#D0D0D0;"></div>
<div class="a" style="left:313.2px;top:75px;width:0.9px;height:6.6px;background:#D0D0D0;"></div>
<div class="t" style="left:122.00px;top:75.30px;color:#2a2a2a;font-size:6.6px;transform:scaleX(0.902);">Untitled1</div>
<div class="t" style="left:156.70px;top:75.30px;color:#2a2a2a;font-size:6.6px;transform:scaleX(0.893);">pinewood.wm2d</div>
<div class="t" style="left:211.30px;top:75.30px;color:#2a2a2a;font-size:6.6px;transform:scaleX(0.874);">controltest.wm2d</div>
<div class="t" style="left:266.40px;top:75.30px;color:#2a2a2a;font-size:6.6px;transform:scaleX(0.923);">Man-lift.wm2d</div>
<svg style="left:300;top:74" width="500" height="12">
<path d="M8.9 3.3l2.8 2.8M11.7 3.3l-2.8 2.8" stroke="#333" stroke-width="0.8"/>
<rect x="492.5" y="0.5" width="7.5" height="8" fill="#f7f7f7"/><path d="M494.2 2.9l2.2 2.2 2.2-2.2z" fill="#222"/>
</svg>
<div class="a" style="left:118px;top:83px;width:682px;height:1px;background:#E4E4E4;"></div>
<div class="a" style="left:117.6px;top:83px;width:0.9px;height:407px;background:#E4E4E4;"></div>
<svg style="left:0;top:0" width="800" height="500">
<rect x="120.6" y="479.6" width="677.2" height="8" fill="#fff"/>
<path d="M120.6 479.7H797.8M120.6 487.5H797.8" stroke="#8a8a8a" stroke-width="1.1"/>
<rect x="136.4" y="480.3" width="642.6" height="1.9" fill="#B4B4B4"/>
<path d="M120.8 479.5V488" stroke="#aaa" stroke-width="0.5"/>
<path d="M127.2 481.2l-3.2 2.5 3.2 2.5z" fill="#a8a8a8"/>
<path d="M128.1 479.3V488M136.4 479.3V488" stroke="#333" stroke-width="0.9"/>
<path d="M129.8 480.8l4.4 3-4.4 3z" fill="#22C022"/>
<path d="M138.6 482.2v3" stroke="#999" stroke-width="0.5"/>
<path d="M781.25 479.3V488M789.1 479.3V488M797.8 479.3V488" stroke="#333" stroke-width="0.9"/>
<rect x="781.7" y="480.1" width="7" height="7" fill="#fafafa"/>
<path d="M787.5 481.2l-3.2 2.5 3.2 2.5z" fill="#a8a8a8"/>
<rect x="789.5" y="480.1" width="7.9" height="7" fill="#f4f4f4"/>
<path d="M790.8 480.8v6" stroke="#22C022" stroke-width="0.9"/>
<path d="M792.2 480.8l4.4 3-4.4 3z" fill="#22C022"/>
<path d="M799.3 83V489" stroke="#e2e2e2" stroke-width="0.9"/>
</svg>
<div class="t" style="left:675.95px;top:491.80px;color:#2a2a2a;font-size:6.5px;transform:scaleX(0.849);">m, N, kg, deg, s</div>
<svg style="left:0;top:0" width="800" height="500">
<circle cx="721.4" cy="494.3" r="2.6" fill="#fde0c0" stroke="#555" stroke-width="0.8"/><circle cx="721.4" cy="494.3" r="1" fill="#f0a050"/><path d="M719.5 496.3l-2.2 2.6" stroke="#444" stroke-width="1.1"/>
<circle cx="731.3" cy="494.3" r="2.6" fill="#fde0c0" stroke="#555" stroke-width="0.8"/><circle cx="731.3" cy="494.3" r="1" fill="#f0a050"/><path d="M729.4 496.3l-2.2 2.6" stroke="#444" stroke-width="1.1"/>
<rect x="737.7" y="491.2" width="7.2" height="8.3" fill="#f4c8a0" stroke="#b08868" stroke-width="0.6"/><circle cx="741.3" cy="495.3" r="1.8" fill="#fff"/><path d="M738 493.5h6.5" stroke="#c88" stroke-width="0.5"/>
<rect x="747.1" y="491.2" width="8.3" height="8.3" fill="#98b0c8" stroke="#607890" stroke-width="0.6"/><path d="M749 495.3h4.5M751.2 493v4.6" stroke="#fff" stroke-width="0.7"/>
<rect x="757.7" y="491.2" width="7.8" height="8.3" fill="#e8b890" stroke="#907060" stroke-width="0.6"/><path d="M758.5 498.5l6-6" stroke="#fff" stroke-width="0.8"/>
<path d="M795 499l4-4M797 499l2-2" stroke="#c4c4c4" stroke-width="0.6"/>
</svg>
<div class="t" style="left:1.95px;top:491.90px;color:#2a2a2a;font-size:6.5px;transform:scaleX(0.876);">Body[2]</div>
<div class="t" style="left:23.70px;top:491.90px;color:#2a2a2a;font-size:6.5px;transform:scaleX(0.871);">Polygon</div>
<svg style="left:0;top:0" width="800" height="500">
<rect x="125.3" y="147.6" width="110.7" height="69.3" fill="#C0C0C0" stroke="#555" stroke-width="0.8"/>
<rect x="137.2" y="148.2" width="35.3" height="8" fill="#fff" stroke="#9a9a9a" stroke-width="0.5"/>
<path d="M137.4 156.1H172.5V148.3" stroke="#444" stroke-width="0.9" fill="none"/>
<path d="M128.2 150.9h3.1v-2l3.4 3.4-3.4 3.4v-2h-3.1z" fill="#fff" stroke="#111" stroke-width="0.8" stroke-linejoin="round"/>
<rect x="137.5" y="161.3" width="91.8" height="46.2" fill="#fff" stroke="#5a5a5a" stroke-width="0.7"/>
<g stroke="#b8b8b8" stroke-width="0.5" stroke-dasharray="0.8 1.6">
<path d="M138 173.2H229M138 184.4H229M138 196H229M168 162V207M198.5 162V207"/>
</g>
<path d="M137.5 161.3V207.6H229.3" stroke="#222" stroke-width="0.7" fill="none"/>
<g stroke="#222" stroke-width="0.6">
<path d="M136 161.5h2M136 173.2h2M136 184.4h2M136 196h2M136 207.5h2M137 167.3h1.2M137 178.8h1.2M137 190.2h1.2M137 201.8h1.2"/>
<path d="M168 206v2.5M198.5 206v2.5M229 206v2.5M152.7 206.5v1.6M183.3 206.5v1.6M213.7 206.5v1.6"/>
</g>
</svg>
<div class="t" style="left:138.00px;top:148.70px;color:#000;font-size:6.2px;transform:scaleX(0.802);">Actuator Force</div>
<div class="t tr" style="left:96.2px;width:40px;text-align:right;top:157.5px;color:#000;font-size:6.1px;letter-spacing:-0.25px">4000</div>
<div class="t tr" style="left:96.2px;width:40px;text-align:right;top:169.4px;color:#000;font-size:6.1px;letter-spacing:-0.25px">2000</div>
<div class="t tr" style="left:96.2px;width:40px;text-align:right;top:180.6px;color:#000;font-size:6.1px;letter-spacing:-0.25px">0.0</div>
<div class="t tr" style="left:96.2px;width:40px;text-align:right;top:192.3px;color:#000;font-size:6.1px;letter-spacing:-0.25px">-2000</div>
<div class="t tr" style="left:96.2px;width:40px;text-align:right;top:203.6px;color:#000;font-size:6.1px;letter-spacing:-0.25px">-4000</div>
<div class="t tc" style="left:127.80000000000001px;width:20px;text-align:center;top:207.8px;color:#000;font-size:6.1px;letter-spacing:-0.2px">0.0</div>
<div class="t tc" style="left:158.4px;width:20px;text-align:center;top:207.8px;color:#000;font-size:6.1px;letter-spacing:-0.2px">2.0</div>
<div class="t tc" style="left:188.8px;width:20px;text-align:center;top:207.8px;color:#000;font-size:6.1px;letter-spacing:-0.2px">4.0</div>
<div class="t tc" style="left:219.2px;width:20px;text-align:center;top:207.8px;color:#000;font-size:6.1px;letter-spacing:-0.2px">6.0</div>
<div class="t" style="left:140.50px;top:162.40px;color:#d00000;font-size:5.9px;letter-spacing:-0.2px">|F| (N)</div>
<div class="t" style="left:220.00px;top:199.40px;color:#000;font-size:5.9px;letter-spacing:-0.2px">t (s)</div>
<div class="t" style="left:140.50px;top:226.40px;color:#000;font-size:5.9px;letter-spacing:-0.2px">Telescope Actuator Length</div>
<div class="t" style="left:146.90px;top:236.60px;color:#000;font-size:5.6px;">dx</div>
<div class="t" style="left:174.70px;top:236.40px;color:#000;font-size:5.6px;">---</div>
<div class="t" style="left:159.70px;top:247.40px;color:#000;font-size:5.6px;letter-spacing:-0.2px">Body Tilt</div>
<div class="t" style="left:144.70px;top:257.20px;color:#000;font-size:5.6px;">rot</div>
<div class="t" style="left:173.70px;top:257.00px;color:#000;font-size:5.6px;">--- &deg;</div>
<svg style="left:0;top:0" width="800" height="500">
<!-- ground -->
<rect x="154.8" y="340.4" width="478" height="61.5" fill="#91733A" stroke="#3c3424" stroke-width="0.9"/>
<!-- wheels -->
<rect x="258.6" y="311" width="11" height="28.8" fill="#000"/>
<rect x="320.8" y="309.8" width="11" height="30" fill="#000"/>
<!-- chassis -->
<rect x="287.2" y="307.8" width="16.5" height="3.9" fill="#A8D0F4" stroke="#6a90b0" stroke-width="0.4"/>
<path d="M274 311.5H316.9V322H320.8V325.3H316.9V332.5H274V325.3H270V322H274Z" fill="#A2E6EE" stroke="#4a8a98" stroke-width="0.5"/>
<!-- turret -->
<path d="M265.4 263.4 L272 268.8 L279.8 288 L314 288 L325.8 291 L325.8 307.8 L265.4 307.8 Z" fill="#FFFF00" stroke="#4a4a00" stroke-width="0.6"/>
<!-- lower horizontal arm -->
<path d="M265.4 263.4 L350 261.5 L351 268 L273.2 269.2 L266.5 268 Z" fill="#FFFF00" stroke="#4a4a00" stroke-width="0.6"/>
<!-- bar 2 (inner right) -->
<path d="M310.7 154.3 L316.4 152.6 L362.5 255.5 L356.5 258.5 Z" fill="#FFFF00" stroke="#4a4a00" stroke-width="0.6"/>
<!-- bar 1 (outer left) -->
<path d="M302.5 163.5 L307.5 162 L353.5 265 L349.5 268.5 Z" fill="#FFFF00" stroke="#4a4a00" stroke-width="0.6"/>
<!-- knuckle -->
<path d="M340.5 271.5 L348.5 270.3 L357.5 256.5 L362.3 254.5 L365.5 260 L349.5 282.5 L342 276 Z" fill="#FFFF00" stroke="#4a4a00" stroke-width="0.6"/>
<!-- short link -->
<path d="M302.3 163.3 L321.4 129.6 L325 128.6 L328.7 134 L319.2 155 L309.6 167 Z" fill="#FFFF00" stroke="#4a4a00" stroke-width="0.6"/>
<!-- upper boom -->
<path d="M320.9 128.4 L446.3 125.2 L446.3 134.7 L380 135.5 L377 137.8 L374.5 135.8 L328.7 135.7 L324 132 Z" fill="#FFFF00" stroke="#4a4a00" stroke-width="0.6"/>
<path d="M321.5 129.2 L328 134.2" stroke="#FFFF00" stroke-width="1.2"/>
<!-- telescope -->
<rect x="446.3" y="126.8" width="20.5" height="6.6" fill="#80D8C8" stroke="#4a9a8a" stroke-width="0.4"/>
<path d="M447 129.3H466.5" stroke="#c8f4ec" stroke-width="1"/>
<!-- mount -->
<path d="M467.3 113.6 H476.2 V145.4 H470.2 V135.5 L466.5 132.5 V125.5 L470.2 121.5 V117.8 H467.3 Z" fill="#858585" stroke="#555" stroke-width="0.4"/>
<rect x="474" y="120" width="1.6" height="23" fill="#fff"/>
<!-- basket -->
<rect x="476.2" y="104.6" width="31.8" height="45.6" fill="#FFFF00" stroke="#5a5a00" stroke-width="0.6"/>
<rect x="477.8" y="114.5" width="29.8" height="8.3" fill="#E00000" stroke="#B80000" stroke-width="0.7"/>
<!-- pins -->
<g fill="#fff" stroke="#4a4a00" stroke-width="0.5">
<circle cx="324.8" cy="133.3" r="1.3"/><circle cx="306.2" cy="166.7" r="1.2"/><circle cx="313.6" cy="156.6" r="1.3"/>
<circle cx="360.7" cy="259.8" r="1.2"/><circle cx="358" cy="265.3" r="1.1"/>
<circle cx="269" cy="266.4" r="1.2"/>
</g>
<circle cx="353" cy="270.8" r="1" fill="#444"/>
<!-- actuators (green) -->
<g stroke="#3aa83a" stroke-width="0.45" fill="none">
<path d="M349 143.6 L376.2 136.8"/>
<path d="M321.4 152.3 L349 142.4 M322.2 155 L349.6 145.2 M349 142.4 L349.6 145.2"/>
<path d="M333.5 210 L335.4 242"/>
<path d="M335.2 242 L338.8 272.4 M337.8 242 L341.5 272 M335.2 242 H337.8"/>
<path d="M300 279 L320.6 270"/>
<path d="M277.5 287.2 L300 277.8 M278.3 289.8 L301 280.2 M300 277.8 L301 280.2"/>
<path d="M269 272.4 L352 271.5"/>
</g>
<g fill="#5ab05a" stroke="#2a702a" stroke-width="0.4">
<circle cx="376.2" cy="136.8" r="1.1"/><circle cx="321.4" cy="153.7" r="1.1"/><circle cx="333.5" cy="210" r="1"/><circle cx="320.6" cy="270" r="1"/><circle cx="276.8" cy="288.6" r="1.1"/><circle cx="340.4" cy="272.4" r="1"/><circle cx="268.8" cy="272.4" r="0.9"/>
</g>
</svg>
</body></html>
